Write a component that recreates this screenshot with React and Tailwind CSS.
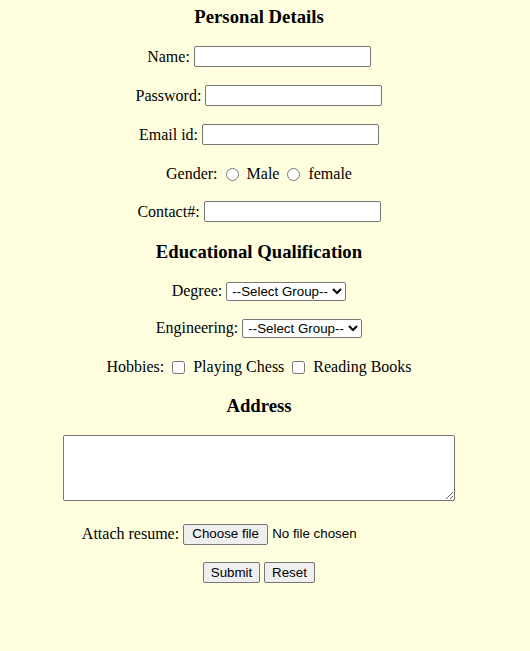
import React from "react";

const field =
  "w-[177px] h-[21px] border border-[#767676] rounded-[2px] bg-white px-[2px] font-['Liberation_Sans',Arial,sans-serif] text-[13.333px]";
const select =
  "h-[19px] border border-[#767676] rounded-[2px] bg-white pl-[1px] font-['Liberation_Sans',Arial,sans-serif] text-[13.333px] text-black";
const btn =
  "h-[21px] border border-[#767676] rounded-[2px] bg-[#efefef] px-[6px] font-['Liberation_Sans',Arial,sans-serif] text-[13.333px] text-black leading-none";

function Row({ label, className = "", children }) {
  return (
    <div className={"flex items-center justify-center gap-[4px] " + className}>
      <span>{label}</span>
      {children}
    </div>
  );
}

function Heading({ children, className = "" }) {
  return (
    <h3 className={"h-[22px] flex items-center justify-center text-[18.72px] font-bold " + className}>
      {children}
    </h3>
  );
}

export default function App() {
  return (
    <div className="min-h-screen bg-[#ffffe0] text-black font-['Liberation_Serif','Times_New_Roman',serif] text-[16px]">
      <form className="w-[518px] flex flex-col" onSubmit={(e) => e.preventDefault()}>
        <Heading className="mt-[6px]">Personal Details</Heading>

        <Row label="Name:" className="mt-[17px] h-[23px]">
          <input type="text" className={field} />
        </Row>
        <Row label="Password:" className="mt-[16px] h-[23px]">
          <input type="password" className={field} />
        </Row>
        <Row label="Email id:" className="mt-[16px] h-[23px]">
          <input type="email" className={field} />
        </Row>
        <div className="mt-[17px] h-[22px] flex items-center justify-center">
          <span>Gender:</span>
          <input type="radio" name="gender" className="ml-[8px] mr-[8px]" />
          <span>Male</span>
          <input type="radio" name="gender" className="ml-[8px] mr-[8px]" />
          <span>female</span>
        </div>
        <Row label="Contact#:" className="mt-[15px] h-[23px]">
          <input type="text" className={field} />
        </Row>

        <Heading className="mt-[18px]">Educational Qualification</Heading>

        <Row label="Degree:" className="mt-[18px] h-[20px]">
          <select className={select + " w-[120px]"}>
            <option>--Select Group--</option>
            <option>B.Tech</option>
            <option>M.Tech</option>
          </select>
        </Row>
        <Row label="Engineering:" className="mt-[17px] h-[20px]">
          <select className={select + " w-[120px]"}>
            <option>--Select Group--</option>
            <option>CSE</option>
            <option>ECE</option>
          </select>
        </Row>
        <div className="mt-[19px] h-[20px] flex items-center justify-center">
          <span>Hobbies:</span>
          <input type="checkbox" className="ml-[8px] mr-[8px]" />
          <span>Playing Chess</span>
          <input type="checkbox" className="ml-[8px] mr-[8px]" />
          <span>Reading Books</span>
        </div>

        <Heading className="mt-[18px]">Address</Heading>

        <div className="mt-[18px] flex justify-center">
          <textarea className="w-[392px] h-[66px] border border-[#767676] rounded-[2px] bg-white resize" />
        </div>

        <Row label="Attach resume:" className="mt-[22px] h-[22px]">
          <div className="w-[253px] flex items-center font-['Liberation_Sans',Arial,sans-serif] text-[13.333px]">
            <button type="button" className={btn + " w-[85px]"}>Choose file</button>
            <span className="ml-[4px]">No file chosen</span>
          </div>
        </Row>

        <div className="mt-[17px] h-[21px] flex items-center justify-center gap-[4px]">
          <button type="submit" className={btn + " w-[57px]"}>Submit</button>
          <button type="reset" className={btn + " w-[51px]"}>Reset</button>
        </div>
      </form>
    </div>
  );
}
